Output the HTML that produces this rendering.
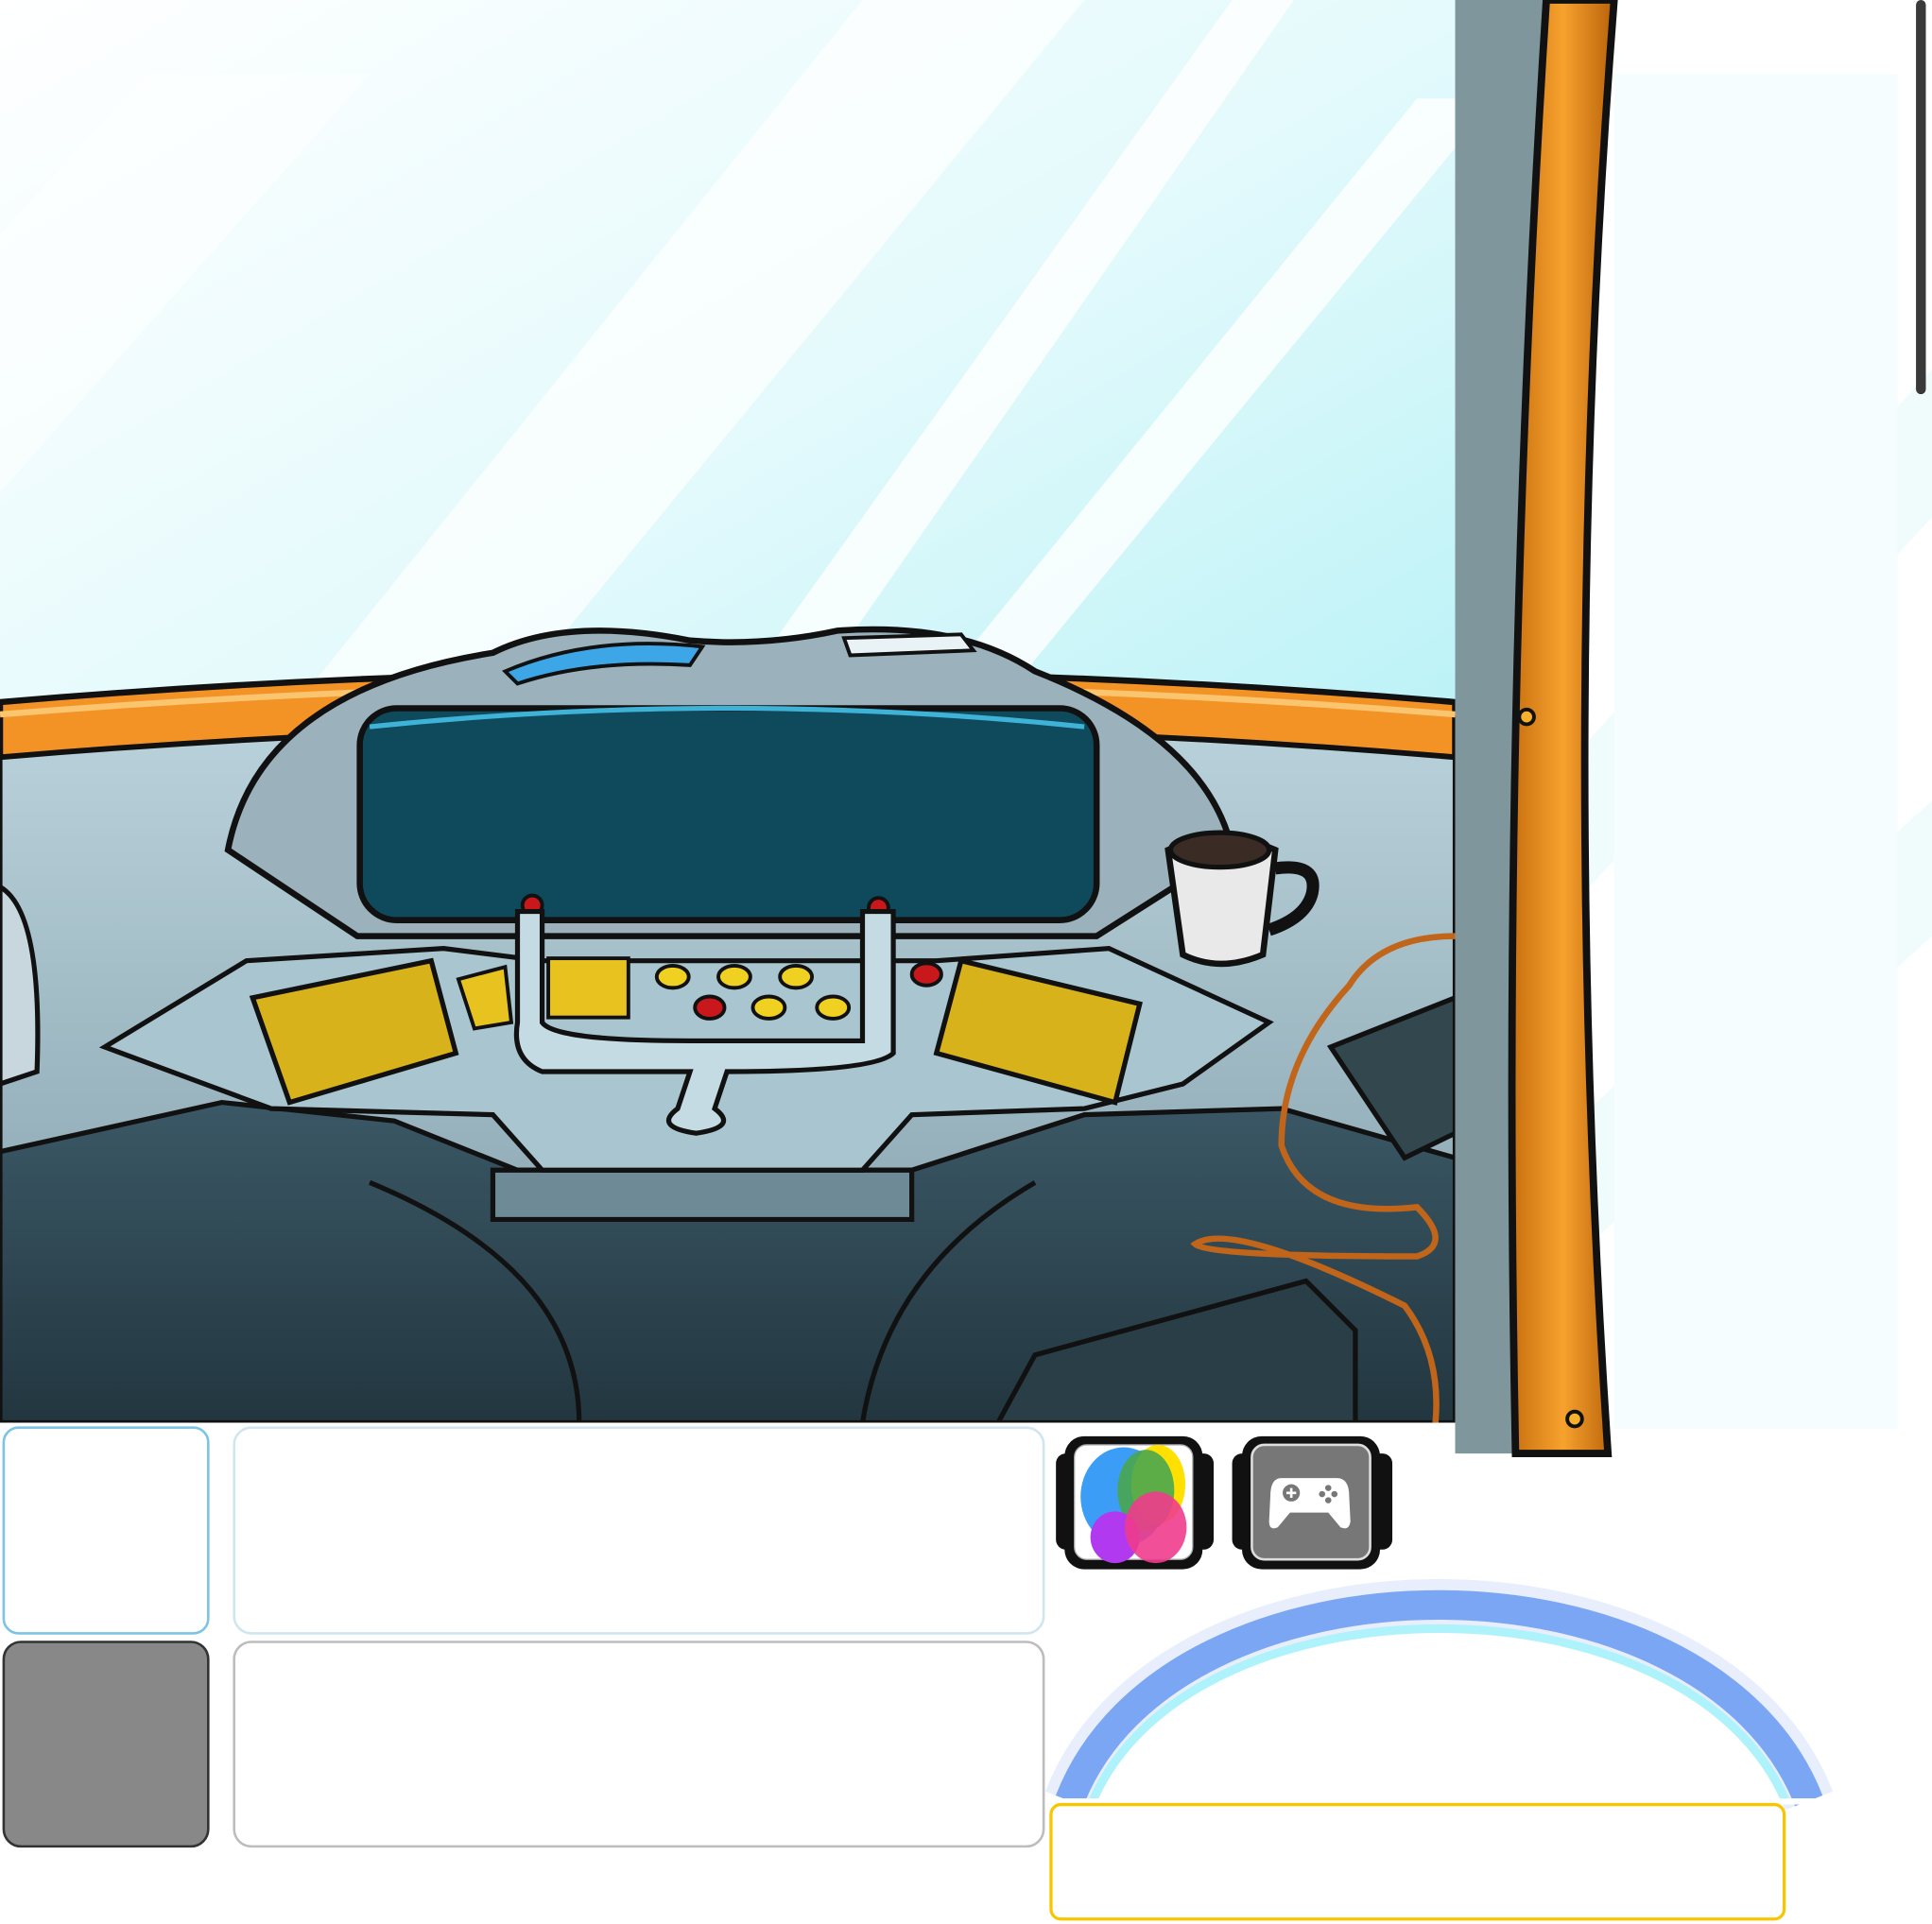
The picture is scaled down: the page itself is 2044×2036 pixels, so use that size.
<!DOCTYPE html>
<html><head><meta charset="utf-8"><style>
html,body{margin:0;padding:0;background:#fff;}
svg{display:block;}
</style></head><body>
<svg width="2044" height="2036" viewBox="0 0 1568 1562" preserveAspectRatio="none" xmlns="http://www.w3.org/2000/svg">
<defs>
<linearGradient id="sky" x1="0" y1="0" x2="0.6" y2="1">
<stop offset="0" stop-color="#ffffff"/><stop offset="0.45" stop-color="#e4fafc"/><stop offset="1" stop-color="#a6eef4"/></linearGradient>
<linearGradient id="dark" x1="0" y1="0" x2="0" y2="1"><stop offset="0" stop-color="#3b5866"/><stop offset="1" stop-color="#22363f"/></linearGradient>
<linearGradient id="dash" x1="0" y1="0" x2="0" y2="1"><stop offset="0" stop-color="#b9d1da"/><stop offset="1" stop-color="#8fabb6"/></linearGradient>
<linearGradient id="orange" x1="0" y1="0" x2="1" y2="0"><stop offset="0" stop-color="#c8700f"/><stop offset="0.5" stop-color="#f7a12e"/><stop offset="1" stop-color="#b8620a"/></linearGradient>
<clipPath id="ck"><rect x="0" y="0" width="1181" height="1155"/></clipPath>
</defs>
<g clip-path="url(#ck)">
<rect x="0" y="0" width="1181" height="1155" fill="url(#sky)"/>
<polygon points="250,560 700,0 880,0 420,560" fill="#ffffff" opacity="0.7"/>
<polygon points="600,560 1000,0 1050,0 660,560" fill="#ffffff" opacity="0.8"/>
<polygon points="760,560 1150,80 1181,80 1181,120 820,560" fill="#ffffff" opacity="0.8"/>
<polygon points="0,190 120,60 300,60 0,400" fill="#ffffff" opacity="0.5"/>
<path d="M0,570 Q590,520 1181,570 L1181,615 Q590,565 0,615 Z" fill="#f39326" stroke="#111" stroke-width="5"/>
<path d="M0,580 Q590,532 1181,580" fill="none" stroke="#fbc46f" stroke-width="5"/>
<path d="M0,615 Q590,565 1181,615 L1181,1000 L0,1000 Z" fill="url(#dash)" stroke="#111" stroke-width="4"/>
<path d="M0,935 L180,895 L320,910 L420,950 L740,950 L880,905 L1040,900 L1181,940 L1181,1155 L0,1155 Z" fill="url(#dark)" stroke="#111" stroke-width="4"/>
<path d="M400,950 L740,950 L740,990 L400,990 Z" fill="#6d8a96" stroke="#111" stroke-width="4"/>
<path d="M300,960 Q470,1030 470,1155 M700,1155 Q720,1030 840,960" stroke="#111" stroke-width="4" fill="none"/>
<path d="M810,1155 L840,1100 L1060,1040 L1100,1080 L1100,1155 Z" fill="#2a3e47" stroke="#111" stroke-width="4"/>
<path d="M185,690 Q210,560 400,530 Q460,500 560,520 Q620,525 680,512 Q780,505 840,545 Q980,600 1000,690 L890,760 L290,760 Z" fill="#9bb1bb" stroke="#111" stroke-width="5"/>
<path d="M410,545 Q480,515 570,525 L560,540 Q480,535 420,555 Z" fill="#3da6e6" stroke="#111" stroke-width="3"/>
<path d="M685,518 L780,515 L790,528 L690,532 Z" fill="#e9f2f5" stroke="#111" stroke-width="3"/>
<rect x="292" y="575" width="598" height="172" rx="30" fill="#0e4a5c" stroke="#111" stroke-width="5"/>
<path d="M300,590 Q590,560 880,590" stroke="#3fb3d7" stroke-width="4" fill="none"/>
<path d="M85,850 L200,780 L360,770 L440,780 L760,780 L900,770 L1030,830 L960,880 L880,900 L740,905 L700,950 L440,950 L400,905 L220,900 Z" fill="#a9c5cf" stroke="#111" stroke-width="4"/>
<path d="M205,810 L350,780 L370,855 L235,895 Z" fill="#d8b21a" stroke="#111" stroke-width="4"/>
<path d="M780,780 L925,815 L905,895 L760,855 Z" fill="#d8b21a" stroke="#111" stroke-width="4"/>
<path d="M372,795 L410,785 L415,830 L385,835 Z" fill="#e8c31f" stroke="#111" stroke-width="3"/>
<rect x="445" y="778" width="65" height="48" fill="#e8c31f" stroke="#111" stroke-width="3"/>
<g fill="#f0d020" stroke="#111" stroke-width="3">
<ellipse cx="546" cy="793" rx="13" ry="9"/><ellipse cx="596" cy="793" rx="13" ry="9"/><ellipse cx="646" cy="793" rx="13" ry="9"/>
<ellipse cx="624" cy="818" rx="13" ry="9"/><ellipse cx="676" cy="818" rx="13" ry="9"/></g>
<g fill="#c8181b" stroke="#111" stroke-width="3"><ellipse cx="576" cy="818" rx="12" ry="9"/><ellipse cx="752" cy="791" rx="12" ry="9"/><circle cx="432" cy="735" r="8"/><circle cx="713" cy="737" r="8"/></g>
<path d="M420,740 L440,740 L440,830 Q450,845 560,845 L700,845 L700,740 L725,740 L725,855 Q710,870 590,870 L580,900 Q600,915 565,920 Q530,915 550,900 L560,870 L440,870 Q415,860 420,830 Z" fill="#c5dbe3" stroke="#111" stroke-width="4"/>
<path d="M948,690 Q990,670 1035,690 L1025,775 Q990,790 960,775 Z" fill="#e9e9e9" stroke="#111" stroke-width="5"/>
<ellipse cx="990" cy="690" rx="40" ry="14" fill="#3a2b25" stroke="#111" stroke-width="4"/>
<path d="M1035,705 Q1070,700 1065,725 Q1060,745 1030,755" fill="none" stroke="#111" stroke-width="10"/>
<path d="M1181,760 Q1120,760 1095,800 Q1040,860 1040,930 Q1060,990 1150,980 Q1180,1010 1150,1020 Q980,1020 970,1010 Q1000,990 1140,1060 Q1170,1100 1165,1155" fill="none" stroke="#c0651a" stroke-width="5"/>
<path d="M1080,850 L1181,810 L1181,920 L1140,940 Z" fill="#33474f" stroke="#111" stroke-width="4"/>
<path d="M0,720 Q35,740 30,870 L0,880 Z" fill="#c7d7dd" stroke="#111" stroke-width="4"/>
</g>
<rect x="1181" y="0" width="387" height="1180" fill="#ffffff"/>
<polygon points="1290,600 1568,300 1568,420 1290,720" fill="#f0fbfc"/>
<polygon points="1290,900 1568,650 1568,760 1290,1010" fill="#f0fbfc"/>
<rect x="1310" y="60" width="230" height="1100" fill="#f5fdfe"/>
<path d="M1181,0 L1255,0 Q1222,580 1240,1180 L1181,1180 Z" fill="#80969d"/>
<path d="M1255,0 Q1218,580 1230,1180 L1305,1180 Q1265,580 1310,0 Z" fill="url(#orange)" stroke="#111" stroke-width="6"/>
<circle cx="1239" cy="582" r="6" fill="#f8b12c" stroke="#111" stroke-width="3"/>
<circle cx="1278" cy="1152" r="6" fill="#f8b12c" stroke="#111" stroke-width="3"/>
<rect x="1555" y="0" width="8" height="320" rx="4" fill="#3a3a3a"/>
<rect x="3" y="1159" width="166" height="167" rx="12" fill="#fff" stroke="#7cc3e6" stroke-width="2"/>
<rect x="190" y="1159" width="657" height="167" rx="14" fill="#fff" stroke="#cfe6f1" stroke-width="2"/>
<rect x="3" y="1333" width="166" height="166" rx="14" fill="#888" stroke="#333" stroke-width="2"/>
<rect x="190" y="1333" width="657" height="166" rx="14" fill="#fff" stroke="#bdbdbd" stroke-width="2"/>
<rect x="857" y="1180" width="128" height="78" rx="8" fill="#111"/>
<rect x="864" y="1166" width="112" height="108" rx="16" fill="#111"/>
<rect x="872" y="1173" width="96" height="93" rx="10" fill="#fff" stroke="#aaa"/>
<ellipse cx="912" cy="1215" rx="35" ry="40" fill="#3b9df5"/>
<ellipse cx="940" cy="1205" rx="22" ry="32" fill="#ffe000"/>
<ellipse cx="930" cy="1210" rx="23" ry="33" fill="#4aa64f" opacity="0.9"/>
<ellipse cx="905" cy="1248" rx="20" ry="21" fill="#b13af0"/>
<ellipse cx="938" cy="1240" rx="25" ry="29" fill="#f03c8c" opacity="0.9"/>
<rect x="1000" y="1180" width="130" height="78" rx="8" fill="#111"/>
<rect x="1008" y="1166" width="112" height="108" rx="16" fill="#111"/>
<rect x="1016" y="1173" width="96" height="93" rx="10" fill="#777" stroke="#ddd" stroke-width="2"/>
<path d="M1040,1200 L1085,1200 Q1095,1200 1095,1215 L1096,1235 Q1095,1243 1088,1240 L1078,1228 L1047,1228 L1037,1240 Q1030,1243 1030,1235 L1031,1215 Q1031,1200 1040,1200 Z" fill="#fff"/>
<circle cx="1048" cy="1212" r="7" fill="#777"/><path d="M1044,1212 h8 M1048,1208 v8" stroke="#fff" stroke-width="2"/>
<g fill="#777"><circle cx="1078" cy="1208" r="2.5"/><circle cx="1073" cy="1213" r="2.5"/><circle cx="1083" cy="1213" r="2.5"/><circle cx="1078" cy="1218" r="2.5"/></g>
<path d="M868,1462 C950,1250 1385,1250 1468,1462" fill="none" stroke="#e8eefc" stroke-width="42"/>
<path d="M868,1462 C950,1250 1385,1250 1468,1462" fill="none" stroke="#7aa6f4" stroke-width="24"/>
<path d="M886,1464 C965,1275 1372,1275 1450,1464" fill="none" stroke="#aef3fb" stroke-width="7"/>
<rect x="850" y="1460" width="640" height="5" fill="#fff"/>
<rect x="853" y="1465" width="595" height="93" rx="8" fill="#fff" stroke="#f7c600" stroke-width="2.5"/>
</svg>
</body></html>
